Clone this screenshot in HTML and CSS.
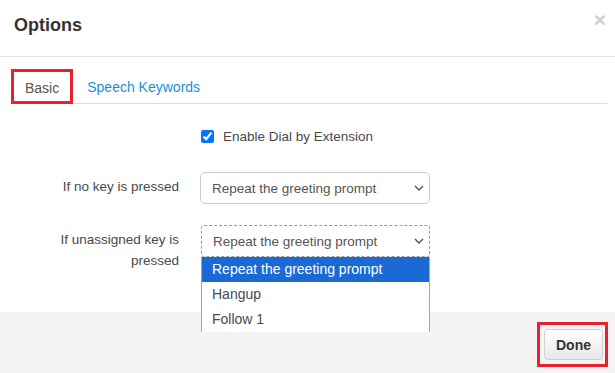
FILE: index.html
```html
<!DOCTYPE html>
<html>
<head>
<meta charset="utf-8">
<link rel="stylesheet" href="styles.css">
</head>
<body>
<div class="modal">
  <div class="modal-header">
    <h4 class="title">Options</h4>
    <span class="close">&times;</span>
  </div>
  <div class="modal-body">
    <div class="tabs">
      <span class="mark mark-tab"><span class="tab tab-active">Basic</span></span>
      <span class="tab tab-link">Speech Keywords</span>
    </div>
    <div class="form">
      <div class="lbl"></div>
      <label class="check"><input type="checkbox" checked><span>Enable Dial by Extension</span></label>

      <div class="lbl">If no key is pressed</div>
      <div class="sel">
        <span>Repeat the greeting prompt</span>
        <svg class="chev" width="10" height="6" viewBox="0 0 10 6"><path d="M1 1 L5 5 L9 1" fill="none" stroke="#555" stroke-width="1.4"/></svg>
      </div>

      <div class="lbl">If unassigned key is pressed</div>
      <div class="sel-wrap">
        <div class="sel sel-focus">
          <span>Repeat the greeting prompt</span>
          <svg class="chev" width="10" height="6" viewBox="0 0 10 6"><path d="M1 1 L5 5 L9 1" fill="none" stroke="#555" stroke-width="1.4"/></svg>
        </div>
        <ul class="menu">
          <li class="opt opt-selected">Repeat the greeting prompt</li>
          <li class="opt">Hangup</li>
          <li class="opt">Follow 1</li>
        </ul>
      </div>
    </div>
  </div>
  <div class="modal-footer">
    <span class="mark mark-btn"><button class="btn">Done</button></span>
  </div>
</div>
</body>
</html>
```
FILE: styles.css
```css
html, body {
  margin: 0;
  padding: 0;
  background: #fff;
}
body {
  font-family: "Liberation Sans", Arial, sans-serif;
  font-size: 13.5px;
  color: #555;
  width: 615px;
  height: 373px;
  overflow: hidden;
}
.modal {
  display: flex;
  flex-direction: column;
  height: 373px;
}
.modal-header {
  display: flex;
  justify-content: space-between;
  align-items: flex-start;
  padding: 15px 9px 21px 14px;
  border-bottom: 1px solid #e5e5e5;
}
.title {
  margin: 0;
  font-size: 18px;
  line-height: 20px;
  font-weight: bold;
  color: #333;
}
.close {
  font-size: 21px;
  line-height: 14px;
  font-weight: bold;
  color: #cfcfcf;
  margin-top: -2px;
}
.modal-body {
  flex: 1;
  padding: 12px 8px 0 11px;
}
.tabs {
  display: flex;
  align-items: flex-end;
  border-bottom: 1px solid #ddd;
}
.mark {
  display: inline-block;
  border: 3px solid #e8222d;
}
.mark-tab {
  margin-bottom: -1px;
  position: relative;
  background: #fff;
}
.tab {
  display: block;
  font-size: 14px;
  line-height: 20px;
}
.tab-active {
  color: #555;
  padding: 6px 11px 3px 11px;
}
.tab-link {
  color: #1e90d6;
  padding: 0 14px 6px 14px;
}
.form {
  display: grid;
  grid-template-columns: 168px 230px;
  column-gap: 21px;
  row-gap: 21px;
  margin-top: 22px;
}
.lbl {
  text-align: right;
  padding: 4px 0 0 28px;
  line-height: 21px;
  color: #4a4a4a;
}
.check {
  display: flex;
  align-items: center;
  height: 20px;
  margin-bottom: 5px;
  color: #4a4a4a;
}
.check input {
  width: 13px;
  height: 13px;
  margin: 0 9px 0 1px;
}
.sel {
  position: relative;
  display: flex;
  align-items: center;
  justify-content: space-between;
  height: 30px;
  border: 1px solid #ccc;
  border-radius: 5px;
  padding: 0 5px 0 11px;
  color: #555;
}
.sel-wrap {
  position: relative;
}
.sel-focus {
  border: 1px dashed #999;
  border-radius: 3px;
  margin-left: 1px;
}
.menu {
  position: absolute;
  z-index: 5;
  left: 1px;
  right: 0;
  top: 32px;
  margin: 0;
  padding: 0;
  list-style: none;
  background: #fff;
  border-left: 1px solid #a5a5a5;
  border-right: 1px solid #a5a5a5;
  height: 75px;
  overflow: hidden;
}
.opt {
  height: 25px;
  line-height: 25px;
  padding-left: 10px;
  font-size: 14px;
  color: #4a4a4a;
}
.opt-selected {
  background: #1b69d4;
  color: #fff;
}
.modal-footer {
  height: 61px;
  box-sizing: border-box;
  background: #f4f4f4;
  display: flex;
  justify-content: flex-end;
  align-items: flex-start;
  padding: 10px 7px 0 0;
}
.mark-btn {
  padding: 4px 2px 4px 4px;
}
.btn {
  display: block;
  font-family: "Liberation Sans", Arial, sans-serif;
  font-size: 14px;
  font-weight: bold;
  color: #333;
  height: 31px;
  width: 59px;
  padding: 0;
  border: 1px solid #d0d0d0;
  border-radius: 4px;
  background: linear-gradient(#ffffff, #e8e8e8);
}
```
